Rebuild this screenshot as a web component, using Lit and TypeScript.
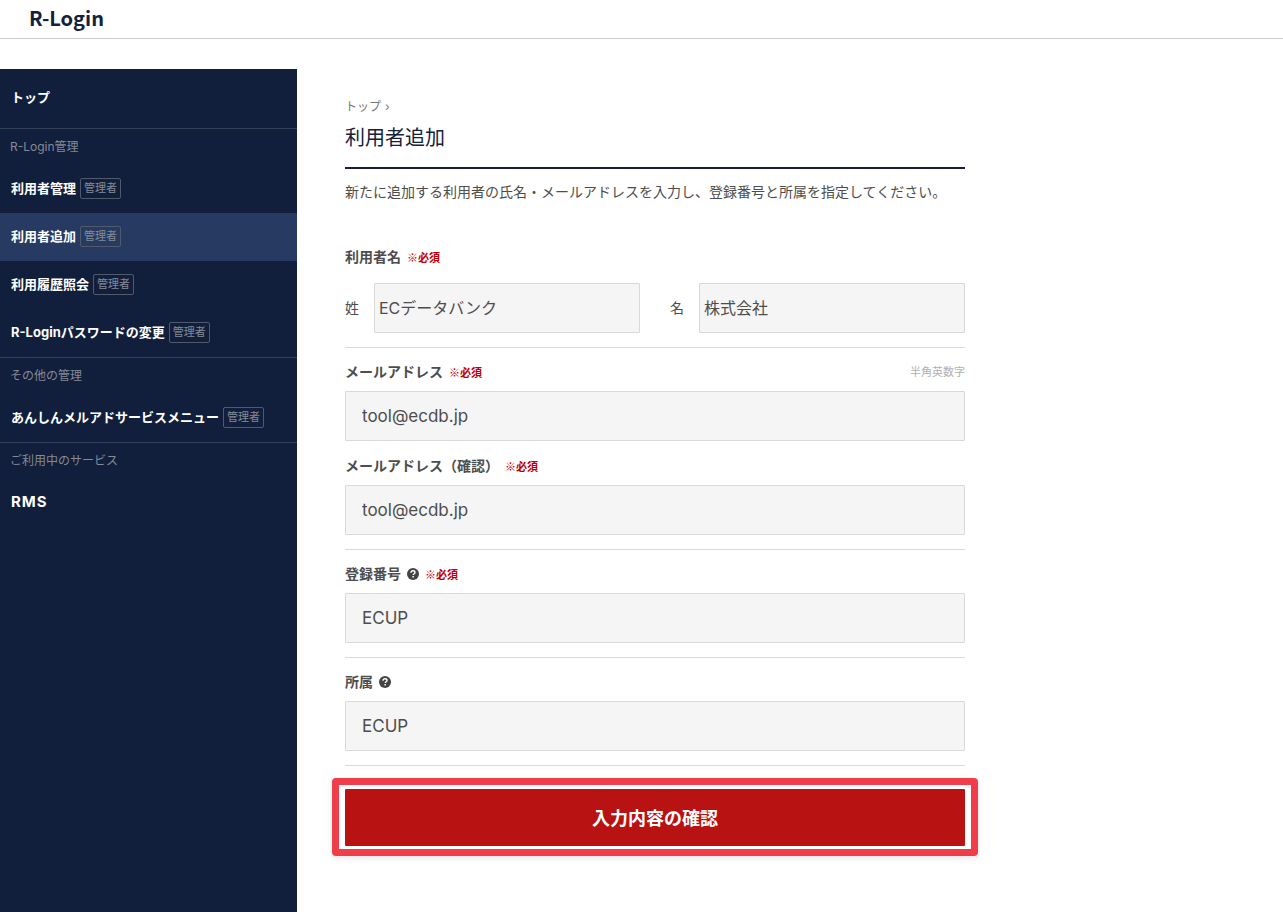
import { LitElement, html, css, nothing } from "lit";
import { customElement, property } from "lit/decorators.js";

interface NavItem {
  label: string;
  admin?: boolean;
  active?: boolean;
  latin?: boolean;
}

interface NavGroup {
  heading: string;
  items: NavItem[];
}

const NAV: NavGroup[] = [
  {
    heading: "R-Login管理",
    items: [
      { label: "利用者管理", admin: true },
      { label: "利用者追加", admin: true, active: true },
      { label: "利用履歴照会", admin: true },
      { label: "R-Loginパスワードの変更", admin: true },
    ],
  },
  { heading: "その他の管理", items: [{ label: "あんしんメルアドサービスメニュー", admin: true }] },
  { heading: "ご利用中のサービス", items: [{ label: "RMS", latin: true }] },
];

@customElement("side-nav")
class SideNav extends LitElement {
  static styles = css`
    :host {
      display: block;
      flex: none;
      width: 297px;
      background: #111f3d;
      color: #fff;
    }
    .top,
    .item {
      display: flex;
      align-items: center;
      color: #fff;
      text-decoration: none;
      font-size: 13px;
      font-weight: 700;
      padding: 0 11px 4px;
      box-sizing: border-box;
      white-space: nowrap;
    }
    .top {
      height: 59px;
    }
    .item {
      height: 48px;
      gap: 4px;
    }
    .item.active {
      background: #263a62;
    }
    .item.latin {
      font-size: 15px;
      letter-spacing: 1px;
    }
    .group {
      border-top: 1px solid #343f58;
    }
    .heading {
      margin: 0;
      padding: 8px 10px;
      font-size: 12px;
      line-height: 20px;
      font-weight: 400;
      color: #858a94;
    }
    .badge {
      border: 1px solid #505a6b;
      border-radius: 2px;
      padding: 0 3px;
      margin-top: 2px;
      font-size: 11px;
      line-height: 19px;
      font-weight: 400;
      color: #858a94;
    }
  `;

  render() {
    return html`
      <nav aria-label="メニュー">
        <a class="top" href="#">トップ</a>
        ${NAV.map(
          (g) => html`
            <div class="group">
              <h2 class="heading">${g.heading}</h2>
              ${g.items.map(
                (i) => html`<a
                  class="item ${i.active ? "active" : ""} ${i.latin ? "latin" : ""}"
                  href="#"
                  aria-current=${i.active ? "page" : nothing}
                  ><span>${i.label}</span>${i.admin ? html`<span class="badge">管理者</span>` : nothing}</a
                >`
              )}
            </div>
          `
        )}
      </nav>
    `;
  }
}

const control = css`
  input {
    display: block;
    box-sizing: border-box;
    width: 100%;
    height: 50px;
    margin: 0;
    padding: 0 16px;
    border: 1px solid #d9d9d9;
    border-radius: 1px;
    background: #f5f5f5;
    color: #4d4d4d;
    font-family: inherit;
    font-size: 17px;
  }
  .label {
    display: flex;
    align-items: center;
    font-size: 14px;
    line-height: 20px;
    font-weight: 700;
    color: #4d4d4d;
  }
  .required {
    margin-left: 6px;
    font-family: "Noto Sans CJK JP", sans-serif;
    font-size: 11px;
    color: #bf0000;
  }
`;

@customElement("text-field")
class TextField extends LitElement {
  @property() label = "";
  @property() value = "";
  @property() type = "text";
  @property() note = "";
  @property({ type: Boolean }) required = false;
  @property({ type: Boolean }) help = false;

  static styles = [
    control,
    css`
      :host {
        display: block;
      }
      .label {
        padding: 14px 0 9px;
      }
      .help {
        display: flex;
        margin-left: 6px;
        padding: 0;
        border: 0;
        background: none;
        color: #444;
      }
      .note {
        margin-left: auto;
        font-size: 11px;
        font-weight: 400;
        color: #b0b0b0;
      }
    `,
  ];

  render() {
    return html`
      <div class="label">
        <label for="control">${this.label}</label>
        ${this.help
          ? html`<button class="help" type="button" aria-label="${this.label}">
              <svg width="12" height="12" viewBox="0 0 12 12" aria-hidden="true">
                <circle cx="6" cy="6" r="6" fill="currentColor" />
                <path
                  d="M4 4.7C4 3.5 4.9 2.8 6 2.8s2 .7 2 1.7c0 1.2-1.8 1.3-1.8 2.6"
                  fill="none"
                  stroke="#fff"
                  stroke-width="1.4"
                />
                <rect x="5.4" y="8" width="1.5" height="1.5" fill="#fff" />
              </svg>
            </button>`
          : nothing}
        ${this.required ? html`<span class="required">※必須</span>` : nothing}
        ${this.note ? html`<span class="note">${this.note}</span>` : nothing}
      </div>
      <input id="control" type=${this.type} .value=${this.value} />
    `;
  }
}

@customElement("app-root")
class AppRoot extends LitElement {
  static styles = [
    control,
    css`
      :host {
        display: flex;
        flex-direction: column;
        min-height: 100vh;
        background: #fff;
        color: #4d4d4d;
        font-family: Inter, "Noto Sans CJK JP", sans-serif;
        font-size: 14px;
      }
      .header {
        padding: 4px 29px 6px;
        border-bottom: 1px solid #ccc;
      }
      .logo {
        color: #14213d;
        font-family: "Noto Sans CJK JP", sans-serif;
        font-size: 20px;
        line-height: 28px;
        font-weight: 700;
        text-decoration: none;
      }
      .body {
        display: flex;
        flex: 1;
        margin-top: 30px;
      }
      .main {
        flex: 1;
        max-width: 620px;
        padding: 28px 48px;
      }
      .crumbs {
        display: flex;
        gap: 4px;
        font-size: 12px;
        line-height: 20px;
        color: #777;
      }
      .crumbs a {
        color: inherit;
        text-decoration: none;
      }
      .title {
        margin: 0;
        padding: 6px 0 14px;
        border-bottom: 2px solid #14213d;
        color: #14213d;
        font-size: 20px;
        line-height: 30px;
        font-weight: 400;
      }
      .lead {
        margin: 13px 0 45px;
        line-height: 20px;
      }
      .section {
        border: 0;
        border-bottom: 1px solid #d9d9d9;
        margin: 0;
        padding: 0 0 14px;
      }
      text-field + text-field {
        margin-top: 1px;
      }
      .names {
        display: grid;
        grid-template-columns: auto 1fr auto 1fr;
        align-items: center;
        margin-top: 16px;
      }
      .names label {
        padding: 0 15px 3px 0;
      }
      .names input {
        padding: 0 4px 2px;
        font-size: 16px;
      }
      .names .given {
        padding-left: 30px;
      }
      .frame {
        margin: 12px -13px 0;
        padding: 4px 6px 3px;
        border: 7px solid #ef3e4a;
        border-radius: 4px;
        box-shadow: 0 2px 6px rgba(0, 0, 0, 0.1);
      }
      .submit {
        display: block;
        width: 100%;
        height: 57px;
        padding: 0 0 2px;
        border: 0;
        border-radius: 1px;
        background: #b81212;
        color: #fff;
        font-family: inherit;
        font-size: 18px;
        font-weight: 700;
      }
    `,
  ];

  render() {
    return html`
      <header class="header"><a class="logo" href="#">R-Login</a></header>
      <div class="body">
        <side-nav></side-nav>
        <main class="main">
          <div class="crumbs"><a href="#">トップ</a><span>›</span></div>
          <h1 class="title">利用者追加</h1>
          <p class="lead">新たに追加する利用者の氏名・メールアドレスを入力し、登録番号と所属を指定してください。</p>
          <form @submit=${(e: Event) => e.preventDefault()}>
            <div class="section" role="group" aria-labelledby="name-label">
              <div class="label"><span id="name-label">利用者名</span><span class="required">※必須</span></div>
              <div class="names">
                <label for="family">姓</label>
                <input id="family" type="text" value="ECデータバンク" />
                <label class="given" for="given">名</label>
                <input id="given" type="text" value="株式会社" />
              </div>
            </div>
            <div class="section">
              <text-field label="メールアドレス" type="email" value="tool@ecdb.jp" note="半角英数字" required></text-field>
              <text-field label="メールアドレス（確認）" type="email" value="tool@ecdb.jp" required></text-field>
            </div>
            <div class="section">
              <text-field label="登録番号" value="ECUP" required help></text-field>
            </div>
            <div class="section">
              <text-field label="所属" value="ECUP" help></text-field>
            </div>
            <div class="frame"><button class="submit" type="submit">入力内容の確認</button></div>
          </form>
        </main>
      </div>
    `;
  }
}
